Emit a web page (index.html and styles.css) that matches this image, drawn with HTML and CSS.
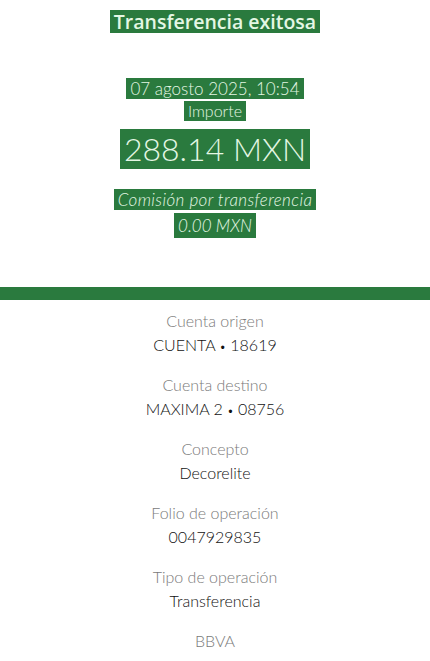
FILE: index.html
```
<!DOCTYPE html>
<html lang="es">
<head>
<meta charset="utf-8">
<link rel="stylesheet" href="styles.css">
</head>
<body>
<header class="top">
  <h1 class="hl title">Transferencia exitosa</h1>
  <div class="hl date">07 agosto 2025, 10:54</div>
  <div class="hl label-imp">Importe</div>
  <div class="hl amount">288.14 MXN</div>
  <div class="hl fee">Comisión por transferencia</div>
  <div class="hl fee fee-val">0.00 MXN</div>
</header>
<div class="bar"></div>
<main class="details">
  <div class="item"><div class="k">Cuenta origen</div><div class="v">CUENTA <span class="sep">•</span> 18619</div></div>
  <div class="item"><div class="k">Cuenta destino</div><div class="v">MAXIMA 2 <span class="sep">•</span> 08756</div></div>
  <div class="item"><div class="k">Concepto</div><div class="v">Decorelite</div></div>
  <div class="item"><div class="k">Folio de operación</div><div class="v">0047929835</div></div>
  <div class="item"><div class="k">Tipo de operación</div><div class="v">Transferencia</div></div>
  <div class="item"><div class="k">BBVA</div></div>
</main>
</body>
</html>
```

FILE: styles.css
```
* { box-sizing: border-box; }
html, body { margin: 0; padding: 0; background: #fff; }
body { font-family: Lato, "Open Sans", sans-serif; width: 430px; height: 661px; overflow: hidden; }

.top {
  display: flex;
  flex-direction: column;
  align-items: center;
  padding-top: 10px;
  height: 287px;
}
.hl {
  background: #2a7a3e;
  color: #e4f7e4;
  padding: 0 4px;
  margin: 0;
}
.title {
  font-family: "Open Sans", sans-serif;
  font-weight: 600;
  font-size: 19.5px;
  line-height: 23px;
}
.date {
  margin-top: 45px;
  font-weight: 300;
  font-size: 17px;
  line-height: 21px;
}
.label-imp {
  margin-top: 2px;
  font-weight: 300;
  font-size: 16px;
  line-height: 20px;
}
.amount {
  margin-top: 8px;
  font-weight: 300;
  font-size: 32px;
  line-height: 40px;
}
.fee {
  margin-top: 20px;
  font-weight: 300;
  font-style: italic;
  font-size: 17px;
  line-height: 21px;
  letter-spacing: 0.4px;
}
.fee-val {
  margin-top: 3px;
  line-height: 25px;
  letter-spacing: 0;
}
.bar { height: 13px; background: #2a7a3e; }

.details {
  display: flex;
  flex-direction: column;
  align-items: center;
  padding-top: 9px;
  gap: 16px;
}
.item { text-align: center; }
.k {
  font-weight: 300;
  font-size: 16px;
  line-height: 24px;
  color: #7a7a7a;
}
.v {
  font-weight: 300;
  font-size: 16px;
  line-height: 24px;
  color: #111;
}
.sep {
  font-size: 11px;
  line-height: 1;
}
```
